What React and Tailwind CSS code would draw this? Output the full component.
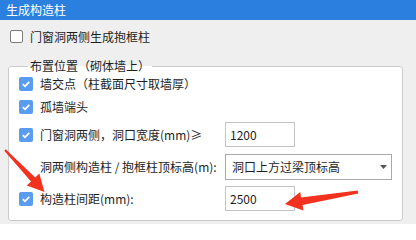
import React from 'react';

const font = { fontFamily: '"Noto Sans CJK SC", "Noto Sans", sans-serif' };

const Checked = () => (
  <span className="flex h-[14px] w-[14px] shrink-0 items-center justify-center rounded-[2px] bg-[#5a9cf0]">
    <svg width="10" height="10" viewBox="0 0 10 10">
      <polyline points="1.8,5.2 4,7.3 8.3,2.8" fill="none" stroke="white" strokeWidth="1.8" />
    </svg>
  </span>
);

const Row = ({ checked, label, height, top, children }) => (
  <div className={`flex items-center ${height} ${top}`}>
    <span className="flex w-[14px] shrink-0 justify-center">{checked && <Checked />}</span>
    <span className="ml-[7px] w-[185px] shrink-0 overflow-hidden whitespace-nowrap text-[12px] leading-[16px] text-[#1e1e1e]">
      {label}
    </span>
    {children}
  </div>
);

const App = () => {
  return (
    <div className="relative h-[224px] w-[416px] overflow-hidden bg-[#efefef]" style={font}>
      <div className="h-[20px] bg-[#2b7fde] pl-[6px] text-[12px] leading-[20px] text-white">生成构造柱</div>

      <div className="mt-[10px] flex h-[13px] items-center pl-[10px]">
        <span className="h-[13px] w-[13px] shrink-0 rounded-[2px] border border-[#7d7d7d] bg-white" />
        <span className="ml-[7px] text-[12px] leading-[16px] text-[#1e1e1e]">门窗洞两侧生成抱框柱</span>
      </div>

      <fieldset className="ml-[8px] mt-[15px] w-[395px] rounded-[3px] border border-[#cbcbcb] bg-white pb-[9px] pl-[10px]">
        <legend className="ml-[9px] px-[2px] text-[12px] leading-[16px] text-[#1e1e1e]">布置位置（砌体墙上）</legend>
        <Row checked label="墙交点（柱截面尺寸取墙厚）" height="h-[20px]" top="mt-0" />
        <Row checked label="孤墙端头" height="h-[20px]" top="mt-[3px]" />
        <Row checked label="门窗洞两侧，洞口宽度(mm)≥" height="h-[25px]" top="mt-[5px]">
          <div className="flex h-[25px] w-[70px] items-center border border-[#c4c4c4] bg-white pl-[4px] text-[12px] text-[#1e1e1e]">
            1200
          </div>
        </Row>
        <Row label="洞两侧构造柱 / 抱框柱顶标高(m):" height="h-[26px]" top="mt-[7px]">
          <div className="flex h-[26px] w-[167px] items-center justify-between border border-[#a9a9a9] bg-white pl-[6px] pr-[4px] text-[12px] text-[#1e1e1e]">
            <span>洞口上方过梁顶标高</span>
            <svg width="7" height="4" viewBox="0 0 7 4">
              <polygon points="0,0 7,0 3.5,4" fill="#555" />
            </svg>
          </div>
        </Row>
        <Row checked label="构造柱间距(mm):" height="h-[25px]" top="mt-[6px]">
          <div className="flex h-[25px] w-[70px] items-center border border-[#c4c4c4] bg-white pl-[4px] text-[12px] text-[#1e1e1e]">
            2500
          </div>
        </Row>
      </fieldset>

      <svg className="pointer-events-none absolute left-0 top-0" width="416" height="224">
        <polygon
          points="4.3,150.7 31,181.6 26.8,185.5 44.5,192 39.3,173.6 35.2,177.5 5.7,149.3"
          fill="#f2311f"
        />
        <polygon
          points="358.3,193.6 302.6,205 303.4,210.5 285,204 300.3,192 301,197.6 357.7,190.4"
          fill="#f2311f"
        />
      </svg>
    </div>
  );
};

export default App;
